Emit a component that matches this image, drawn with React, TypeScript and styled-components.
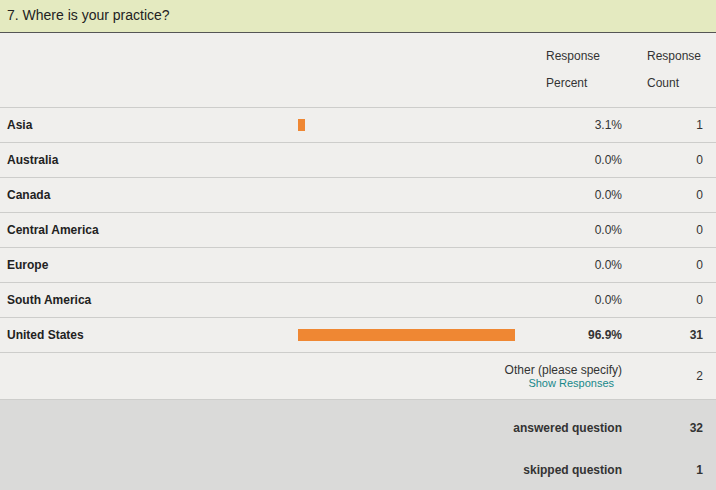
import React from "react";
import styled, { createGlobalStyle } from "styled-components";

const Global = createGlobalStyle`
  html, body { margin: 0; padding: 0; background: #f0efed; }
  body { font-family: "Liberation Sans", Arial, sans-serif; color: #333; }
`;

const Panel = styled.div`
  width: 716px;
  height: 490px;
  background: #f0efed;
  overflow: hidden;
`;

const Title = styled.div`
  height: 32px;
  background: #e4eac0;
  border-bottom: 1px solid #555;
  font-size: 14px;
  line-height: 31px;
  padding-left: 7px;
  color: #222;
`;

const Row = styled.div<{ $h: number; $border?: boolean }>`
  display: grid;
  grid-template-columns: 298px 240px 92px 86px;
  align-items: center;
  height: ${(p) => p.$h}px;
  border-bottom: ${(p) => (p.$border ? "1px solid #cdcdcb" : "none")};
  font-size: 12px;
`;

const Label = styled.div`
  padding-left: 7px;
  font-weight: bold;
  color: #222;
`;

const BarCell = styled.div`
  display: flex;
  align-items: center;
`;

const Bar = styled.div`
  height: 12px;
  background: #ef8733;
`;

const Percent = styled.div<{ $bold?: boolean }>`
  text-align: right;
  padding-right: 8px;
  font-weight: ${(p) => (p.$bold ? "bold" : "normal")};
`;

const Count = styled.div<{ $bold?: boolean }>`
  text-align: right;
  padding-right: 13px;
  font-weight: ${(p) => (p.$bold ? "bold" : "normal")};
`;

const HeadCell = styled.div<{ $pl: number }>`
  align-self: start;
  padding-top: 10px;
  padding-left: ${(p) => p.$pl}px;
  line-height: 27px;
  font-size: 12px;
`;

const OtherCell = styled.div`
  grid-column: 1 / 4;
  text-align: right;
  padding-right: 8px;
  line-height: 13px;
  padding-top: 2px;
`;

const ShowLink = styled.a`
  display: block;
  font-size: 11px;
  color: #17888a;
  padding-right: 8px;
  text-decoration: none;
`;

const Footer = styled.div`
  background: #dadad9;
  padding-top: 7px;
  height: 83px;
`;

const FootRow = styled.div`
  display: grid;
  grid-template-columns: 630px 86px;
  align-items: center;
  height: 42px;
  font-size: 12px;
  font-weight: bold;
  color: #333;
`;

const FootLabel = styled.div`
  text-align: right;
  padding-right: 8px;
`;

const rows = [
  { name: "Asia", pct: 3.1, count: 1 },
  { name: "Australia", pct: 0, count: 0 },
  { name: "Canada", pct: 0, count: 0 },
  { name: "Central America", pct: 0, count: 0 },
  { name: "Europe", pct: 0, count: 0 },
  { name: "South America", pct: 0, count: 0 },
  { name: "United States", pct: 96.9, count: 31 },
];

export default function App() {
  return (
    <Panel>
      <Global />
      <Title>7. Where is your practice?</Title>
      <Row $h={74} $border>
        <div />
        <div />
        <HeadCell $pl={8}>
          Response
          <br />
          Percent
        </HeadCell>
        <HeadCell $pl={17}>
          Response
          <br />
          Count
        </HeadCell>
      </Row>
      {rows.map((r) => {
        const bold = r.pct > 50;
        return (
          <Row key={r.name} $h={34} $border>
            <Label>{r.name}</Label>
            <BarCell>
              {r.pct > 0 && <Bar style={{ width: Math.round(r.pct * 2.24) }} />}
            </BarCell>
            <Percent $bold={bold}>{r.pct.toFixed(1)}%</Percent>
            <Count $bold={bold}>{r.count}</Count>
          </Row>
        );
      })}
      <Row $h={46} $border>
        <OtherCell>
          Other (please specify)
          <ShowLink href="#">Show Responses</ShowLink>
        </OtherCell>
        <Count>2</Count>
      </Row>
      <Footer>
        <FootRow>
          <FootLabel>answered question</FootLabel>
          <Count $bold>32</Count>
        </FootRow>
        <FootRow>
          <FootLabel>skipped question</FootLabel>
          <Count $bold>1</Count>
        </FootRow>
      </Footer>
    </Panel>
  );
}
